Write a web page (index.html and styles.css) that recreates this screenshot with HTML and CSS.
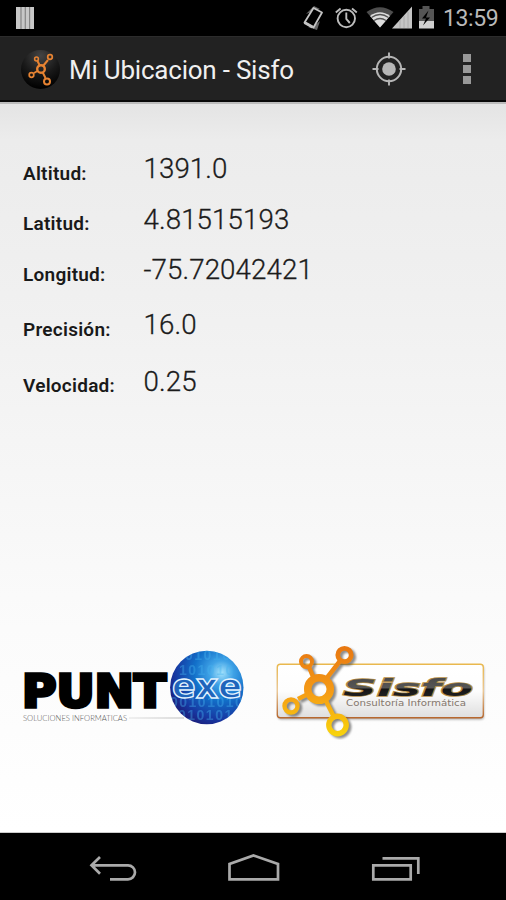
FILE: index.html
```html
<!DOCTYPE html>
<html lang="es">
<head>
<meta charset="utf-8">
<title>Mi Ubicacion - Sisfo</title>
<link rel="stylesheet" href="styles.css">
</head>
<body>
<div class="screen">
  <header class="status">
    <svg class="bars" width="18" height="22" viewBox="0 0 18 22"><path fill="#c8c8c8" d="M0 0h18v22H0z"/><path stroke="#858585" stroke-width="1.2" d="M5 0v22M9.3 0v22M13.6 0v22"/></svg>
    <svg class="tray" width="136" height="36" viewBox="300 0 136 36">
      <path fill="#666" d="M306 14L314 6l6 3-6 2zM320 21l-3 9-9-3 6-1z"/>
      <path fill="#000" stroke="#c4c4c4" stroke-width="1.800" stroke-linejoin="round" d="M313.500 8l8.500 4.500-8.500 15-9-5z"/>
      <path stroke="#c4c4c4" stroke-width="3" d="M304.500 22.500l8 4.500"/>
      <g fill="none" stroke="#bcbcbc" stroke-width="1.900"><circle cx="346.300" cy="18.500" r="8.700"/><path d="M346.300 12.500v6.500l3.500 4M335.800 12.500l4.800-4M356.800 12.500l-4.800-4"/></g>
      <path fill="#4d4d4d" d="M366.500 12Q380 2.500 393.500 12L380 27.500z"/>
      <path fill="#ddd" d="M370 16Q380 8.500 390 16L380 27.500z"/>
      <path fill="none" stroke="#555" stroke-width="1.300" d="M371.500 17.500q8.500-6 17 0M374 20.500q6-4 12 0"/>
      <path fill="#c5c5c5" d="M392 28.500L412 6.500v22z"/>
      <path stroke="#aaa" d="M400 20v8M404 16v12M408 12v16"/>
      <path fill="#555" d="M422.500 6h7v3h4.500v12h-15V9h3.500z"/><path fill="#d0d0d0" d="M419 21h15v7.500h-15z"/>
      <path fill="#000" d="M428.500 10.500l-6.500 8h4l-3 7 7-8h-4z"/>
    </svg>
    <span class="clock">13:59</span>
  </header>
  <div class="bar">
    <svg class="logo" width="40" height="42" viewBox="20 48 40 42">
      <defs><radialGradient id="orb" cx=".5" cy=".15" r=".85"><stop offset="0" stop-color="#444"/><stop offset=".55" stop-color="#191919"/><stop offset="1" stop-color="#000"/></radialGradient></defs>
      <circle cx="40.500" cy="69.500" r="19.500" fill="url(#orb)"/>
      <g fill="none" stroke="#e78332"><path stroke-width="2" d="M40 66l-2.500-5M43 66l5-6M37.500 71l-3.500 2M42.500 72l3 6"/><circle cx="41" cy="69" r="3.800" stroke-width="2.400"/><circle cx="36.500" cy="59" r="1.900" stroke-width="1.500"/><circle cx="50" cy="57" r="2.300" stroke-width="1.700"/><circle cx="31.500" cy="75" r="2.300" stroke-width="1.700"/><circle cx="47" cy="81.500" r="3" stroke-width="2"/></g>
    </svg>
    <h1>Mi Ubicacion - Sisfo</h1>
    <svg class="locate" width="34" height="34" viewBox="-17 -17 34 34"><g fill="none" stroke="#b6b6b6"><circle r="12.200" stroke-width="2"/><path stroke-width="1.900" d="M0-16.500v6M0 16.500v-6M-16.500 0h6M16.500 0h-6"/></g><circle r="6.800" fill="#b6b6b6"/></svg>
    <div class="more"><i></i><i></i><i></i></div>
  </div>
  <main>
    <dl>
      <div class="row"><dt>Altitud:</dt><dd>1391.0</dd></div>
      <div class="row"><dt>Latitud:</dt><dd>4.81515193</dd></div>
      <div class="row tall"><dt>Longitud:</dt><dd>-75.72042421</dd></div>
      <div class="row taller"><dt>Precisión:</dt><dd>16.0</dd></div>
      <div class="row"><dt>Velocidad:</dt><dd>0.25</dd></div>
    </dl>
    <div class="brands">
      <svg class="puntoexe" width="226" height="80" viewBox="20 648 226 80">
        <defs>
          <radialGradient id="globe" cx=".7" cy=".3" r=".75"><stop offset="0" stop-color="#a5e3fc"/><stop offset=".22" stop-color="#3fa2e6"/><stop offset=".5" stop-color="#1270c9"/><stop offset=".85" stop-color="#1737a1"/><stop offset="1" stop-color="#1b2382"/></radialGradient>
          <clipPath id="ball"><circle cx="206.800" cy="687.500" r="36.700"/></clipPath>
          <linearGradient id="rule"><stop offset="0" stop-color="#e2e2e2"/><stop offset="1" stop-color="#bbb"/></linearGradient>
        </defs>
        <text class="punt" x="22" y="707" textLength="144" lengthAdjust="spacingAndGlyphs">PUNT</text>
        <text class="tag" x="23" y="721" textLength="104" lengthAdjust="spacingAndGlyphs">SOLUCIONES INFORMATICAS</text>
        <path fill="url(#rule)" d="M129 717.500h55v1h-55z"/>
        <circle cx="206.800" cy="687.500" r="36.700" fill="url(#globe)"/>
        <g class="bits" clip-path="url(#ball)"><text x="185" y="660">01010</text><text x="179" y="675">101010</text><text x="170" y="707">00101010</text><text x="178" y="720">0101010</text></g>
        <text class="exe" x="172" y="698" textLength="70" lengthAdjust="spacingAndGlyphs">exe</text>
      </svg>
      <svg width="214" height="98" viewBox="274 642 214 98">
        <defs>
          <linearGradient id="frame" x2="0" y2="1"><stop offset="0" stop-color="#e9b84e"/><stop offset=".5" stop-color="#ebc896"/><stop offset="1" stop-color="#b6672e"/></linearGradient>
          <linearGradient id="card" x2="0" y2="1"><stop offset="0" stop-color="#fff"/><stop offset=".5" stop-color="#fdfdfd"/><stop offset="1" stop-color="#dedede"/></linearGradient>
          <linearGradient id="node" gradientUnits="userSpaceOnUse" x1="0" y1="648" x2="0" y2="736"><stop offset="0" stop-color="#e87811"/><stop offset=".5" stop-color="#f59b16"/><stop offset="1" stop-color="#f8d40b"/></linearGradient>
          <linearGradient id="ink" gradientUnits="userSpaceOnUse" x1="0" y1="678" x2="0" y2="697"><stop offset="0" stop-color="#4a4a4a"/><stop offset=".5" stop-color="#555"/><stop offset=".6" stop-color="#151515"/><stop offset="1" stop-color="#222"/></linearGradient>
          <g id="molecule"><path stroke-width="4.500" d="M314 679l-5-12M326 679l14-18M310 693l-12 6M324 697l10 20"/><circle cx="319" cy="689" r="11.300" stroke-width="7.500"/><circle cx="306.500" cy="661.500" r="5.500" stroke-width="4"/><circle cx="344.500" cy="655" r="6.700" stroke-width="4.800"/><circle cx="291" cy="706" r="6.500" stroke-width="4.400"/><circle cx="337.500" cy="725" r="8.700" stroke-width="5.400"/></g>
        </defs>
        <rect class="shade" x="278" y="666" width="206" height="53.500" rx="3"/>
        <rect x="277.300" y="664.300" width="206" height="53.500" rx="3" fill="url(#card)" stroke="url(#frame)" stroke-width="1.400"/>
        <use href="#molecule" class="shadow"/>
        <use href="#molecule" fill="none" stroke="url(#node)"/>
        <text class="sisfo" x="343" y="696" textLength="130" lengthAdjust="spacingAndGlyphs">Sisfo</text>
        <text class="consult" x="346" y="706.300" textLength="120" lengthAdjust="spacingAndGlyphs">Consultoría Informática</text>
      </svg>
    </div>
  </main>
  <nav>
    <svg width="506" height="67" viewBox="0 833 506 67" fill="none" stroke="#aaa" stroke-width="2.700">
      <path d="M92 865.300h36a7 7 0 0 1 0 14h-18M100 857l-8.500 8.300 8.500 8.500"/>
      <path d="M229.500 879.300v-15.300l24-8.500 24.500 8.500v15.300z"/>
      <path d="M373.300 865.300h37.400v14h-37.400zM382.500 858.300h35.800v15.700"/>
    </svg>
  </nav>
</div>
</body>
</html>
```
FILE: styles.css
```css
* { box-sizing: border-box; }
body { margin: 0; font-family: Roboto, "Liberation Sans", sans-serif; }
svg { display: block; flex: none; }
.screen { width: 506px; height: 900px; display: flex; flex-direction: column; background: #000; overflow: hidden; }
.status { height: 36px; display: flex; align-items: center; background: #000; }
.bars { margin-left: 16px; }
.tray { margin-left: 266px; }
.clock { margin-left: 7px; padding-top: 2px; color: #b9b9b9; font-size: 23px; line-height: 36px; letter-spacing: -.4px; }
.bar { height: 66px; display: flex; align-items: center; background: #222; border-top: 1px solid #2c2c2c; border-bottom: 2px solid #080808; }
.logo { margin-left: 20px; }
h1 { margin: 0 0 0 9px; padding-top: 2px; width: 302px; color: #f0f0f0; font-size: 26px; font-weight: 400; line-height: 40px; letter-spacing: -.22px; white-space: nowrap; }
.locate { margin: 1px 0 0 1px; }
.more { margin: 1px 0 0 57px; display: grid; gap: 3px; }
.more i { width: 8px; height: 8px; background: #999; }
main { height: 731px; border-top: 2px solid #bbb; background: linear-gradient(#e4e4e4, #ececec 5%, #f0f0f0 26%, #f4f4f4 42%, #fbfbfb 72%, #fff); border-bottom: 1px solid #ccc; }
dl { margin: 0; padding: 47px 0 0 23px; height: 538px; }
.row { display: flex; height: 50.5px; }
.tall { height: 55px; }
.taller { height: 56.5px; }
dt { width: 120.5px; padding-top: 8.5px; font-size: 19px; font-weight: 600; line-height: 28px; letter-spacing: .25px; color: #191919; }
dd { margin: 0; font-size: 27.7px; font-weight: 300; line-height: 36px; letter-spacing: .1px; color: #1b1b1b; -webkit-text-stroke: .3px #1b1b1b; }
.brands { display: flex; align-items: flex-start; padding-left: 20px; gap: 28px; }
.puntoexe { margin-top: 6px; }
.punt { font: 700 45px "DejaVu Sans", sans-serif; stroke: #000; stroke-width: 3.4px; }
.tag { font: 300 8.5px Lato, sans-serif; fill: #555; }
.bits { font: 700 14px "Liberation Sans", sans-serif; fill: #45b2ee; opacity: .4; letter-spacing: 1.5px; }
.exe { font: 700 34px "DejaVu Sans", sans-serif; fill: #1f64bb; stroke: #e4f4ff; stroke-width: 1.3px; }
.shade { fill: #aaa; filter: blur(1px); }
.shadow { fill: none; stroke: #444; opacity: .6; filter: blur(1px); transform: translate(2.5px, 2px); }
.sisfo { font: italic 700 23.5px "DejaVu Sans", sans-serif; fill: url(#ink); stroke: #b58d45; stroke-width: 1.6px; paint-order: stroke; }
.consult { font: 400 8px "DejaVu Sans", sans-serif; fill: #85776c; }
nav { height: 67px; background: #000; }
```
